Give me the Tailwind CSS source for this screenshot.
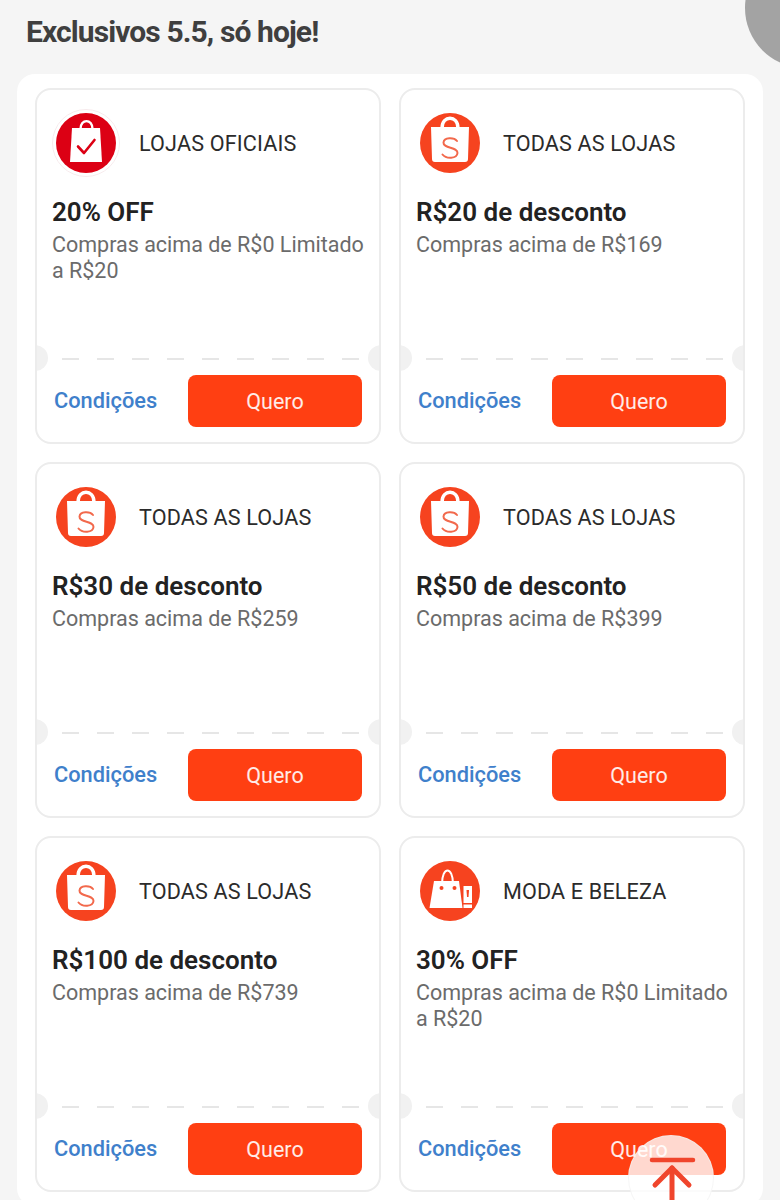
<!DOCTYPE html>
<html lang="en">
<head>
    <meta charset="UTF-8">
    <meta name="viewport" content="width=device-width, initial-scale=1.0">
    <title>Exclusivos 5.5</title>
    <script src="https://cdn.jsdelivr.net/npm/@tailwindcss/browser@4"></script>
</head>
<body class="bg-[#f5f5f5] font-['Roboto',sans-serif]">
<div class="relative w-[780px] h-[1200px] overflow-hidden">

    <!-- Header -->
    <h1 class="h-[74px] pl-[26px] pt-[13px] text-[30px] leading-[38px] font-bold tracking-[-0.9px] text-[#3f3f3f]">Exclusivos 5.5, só hoje!</h1>

    <!-- Coupons -->
    <div id="coupons" class="mx-[17px] bg-white rounded-[18px] px-[18px] py-[14px] grid grid-cols-2 gap-[18px]"></div>

    <!-- Floating corner bubble -->
    <div class="absolute left-[745px] top-[-52px] w-[120px] h-[120px] rounded-full bg-[#a3a3a3]"></div>

    <!-- Back to top -->
    <div class="absolute left-[628px] top-[1135px] w-[86px] h-[86px] rounded-full bg-white/80 border border-[#f0f0f0]/60">
        <svg class="absolute left-0 top-0" width="86" height="86" viewBox="0 0 86 86" fill="none" stroke="#f0452c" stroke-linecap="round" stroke-linejoin="round">
            <path d="M23 24H64" stroke-width="4.5"/>
            <path d="M43 32V70" stroke-width="5"/>
            <path d="M26 49L43 32L60 49" stroke-width="5"/>
        </svg>
    </div>
</div>

<script>
    const icons = {
        official: `<svg width="68" height="68" viewBox="0 0 68 68">
            <circle cx="34" cy="34" r="33.5" fill="#fff" stroke="#f7ebed"/>
            <circle cx="34" cy="34" r="30" fill="#dc0014"/>
            <path d="M20 19H48L50 53H18Z" fill="#fff"/>
            <path d="M28.5 20C28.5 9.5 40.5 9.5 40.5 20" fill="none" stroke="#fff" stroke-width="2.4"/>
            <path d="M26 37.5L32 44L42.5 31" fill="none" stroke="#dc0014" stroke-width="2.6" stroke-linecap="round" stroke-linejoin="round"/>
        </svg>`,
        shopee: `<svg width="68" height="68" viewBox="0 0 68 68">
            <circle cx="34" cy="34" r="30" fill="#f6431f"/>
            <path d="M15 18H53L52 50Q52 53 49 53H19Q16 53 16 50Z" fill="#fff"/>
            <path d="M26 19C26 6 42 6 42 19" fill="none" stroke="#fff" stroke-width="3.4"/>
            <path d="M41 32C38 28 28 28 27.5 33.5C27 40 42 37.5 41.5 44C41 50 30 50 26.5 45.5" fill="none" stroke="#f2694c" stroke-width="2" stroke-linecap="round"/>
        </svg>`,
        fashion: `<svg width="68" height="68" viewBox="0 0 68 68">
            <circle cx="34" cy="34" r="30" fill="#f6431f"/>
            <path d="M18 24H43L46.5 51H13.5Z" fill="#fff"/>
            <path d="M26 27C26 9 37 9 37 27" fill="none" stroke="#fff" stroke-width="2"/>
            <circle cx="25.5" cy="31" r="2" fill="#f6431f"/>
            <circle cx="38.5" cy="31" r="2" fill="#f6431f"/>
            <path d="M47.5 29H56V46H47.5Z" fill="#fff"/>
            <path d="M50.5 33H53L52.5 40H51Z" fill="#f6431f"/>
            <path d="M47.5 47.5H56V51H47.5Z" fill="#fff"/>
        </svg>`
    };

    const coupons = [
        { icon: "official", scope: "LOJAS OFICIAIS", title: "20% OFF", text: "Compras acima de R$0 Limitado a R$20" },
        { icon: "shopee", scope: "TODAS AS LOJAS", title: "R$20 de desconto", text: "Compras acima de R$169" },
        { icon: "shopee", scope: "TODAS AS LOJAS", title: "R$30 de desconto", text: "Compras acima de R$259" },
        { icon: "shopee", scope: "TODAS AS LOJAS", title: "R$50 de desconto", text: "Compras acima de R$399" },
        { icon: "shopee", scope: "TODAS AS LOJAS", title: "R$100 de desconto", text: "Compras acima de R$739" },
        { icon: "fashion", scope: "MODA E BELEZA", title: "30% OFF", text: "Compras acima de R$0 Limitado a R$20" }
    ];

    document.getElementById("coupons").innerHTML = coupons.map(c => `
        <div class="relative h-[356px] border-2 border-[#ececec] rounded-[16px] overflow-hidden flex flex-col">
            <div class="h-[268px] pl-[15px] pr-[14px] pt-[19px]">
                <div class="flex items-center h-[68px]">
                    ${icons[c.icon]}
                    <span class="ml-[19px] mt-[2px] text-[21.6px] tracking-[0.15px] text-[#2b2b2b]">${c.scope}</span>
                </div>
                <p class="mt-[18px] text-[26px] leading-[34px] font-semibold text-[#222]">${c.title}</p>
                <p class="mt-[3px] text-[21.5px] leading-[26px] text-[#6b6b6b]">${c.text}</p>
            </div>
            <svg class="ml-[25px] block" width="300" height="2">
                <line x1="0" y1="1" x2="300" y2="1" stroke="#e6e6e6" stroke-width="2" stroke-dasharray="17 18"/>
            </svg>
            <span class="absolute left-[-15px] top-[255px] w-[26px] h-[26px] rounded-full bg-[#f1f1f1]"></span>
            <span class="absolute right-[-15px] top-[255px] w-[26px] h-[26px] rounded-full bg-[#f1f1f1]"></span>
            <div class="flex items-center pl-[17px] pr-[17px] pt-[15px]">
                <span class="w-[134px] text-[21.8px] font-medium text-[#3f80cb]">Condições</span>
                <button class="w-[174px] h-[52px] pt-[2px] rounded-[8px] bg-[#ff3f12] text-[21.5px] text-white/90">Quero</button>
            </div>
        </div>
    `).join("");
</script>
</body>
</html>
